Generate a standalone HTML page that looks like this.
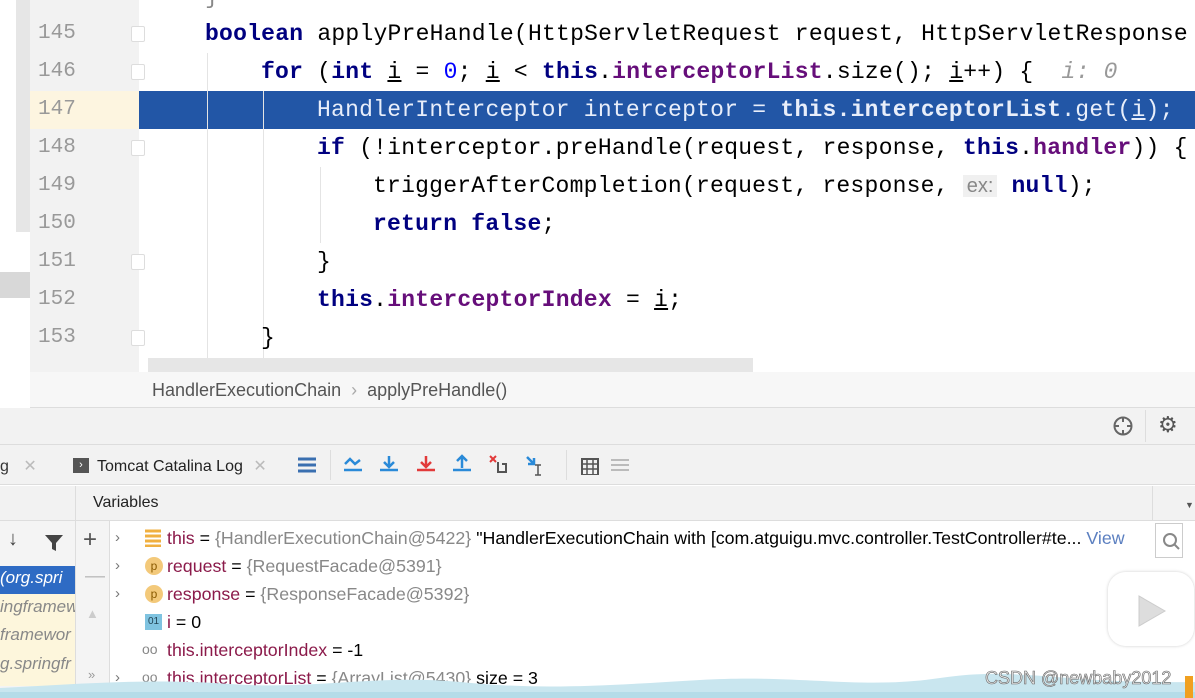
<!DOCTYPE html>
<html><head><meta charset="utf-8"><style>
*{margin:0;padding:0;box-sizing:border-box}
body{width:1195px;height:698px;overflow:hidden;background:#fff;position:relative;font-family:"Liberation Sans",sans-serif}
.a{position:absolute}
.code{position:absolute;font-family:"Liberation Mono",monospace;font-size:23px;letter-spacing:0.24px;white-space:pre;color:#000;line-height:38px;height:38px}
.k{color:#000080;font-weight:bold}
.f{color:#660e7a;font-weight:bold}
.n{color:#0000ff}
.u{text-decoration:underline}
.ln{position:absolute;left:38px;width:40px;font-family:"Liberation Mono",monospace;font-size:21px;color:#999;line-height:38px}
.fold{position:absolute;left:131px;width:14px;height:16px;border:1px solid #ddd;border-radius:2px;background:#fff}
.v{position:absolute;left:167px;font-size:17.8px;color:#000;white-space:nowrap;line-height:28px;height:28px}
.vn{color:#8b1a4a}
.g{color:#888}
.arr{position:absolute;left:115px;font-size:15px;color:#777;line-height:28px}
.pi{position:absolute;left:145px;width:18px;height:18px;border-radius:50%;background:#f3c97a;color:#8a5a00;font-size:12px;text-align:center;line-height:18px}
</style></head><body>
<div class="a" style="left:0;top:0;width:30px;height:408px;background:#fff"></div>
<div class="a" style="left:16px;top:0;width:14px;height:232px;background:#e6e6e6"></div>
<div class="a" style="left:0;top:272px;width:30px;height:26px;background:#d8d8d8"></div>
<div class="a" style="left:30px;top:0;width:109px;height:372px;background:#f2f2f2"></div>
<div class="a" style="left:30px;top:91px;width:109px;height:38px;background:#fdf5e0"></div>
<div class="ln" style="top:-23px">144</div>
<div class="ln" style="top:15px">145</div>
<div class="ln" style="top:53px">146</div>
<div class="ln" style="top:91px">147</div>
<div class="ln" style="top:129px">148</div>
<div class="ln" style="top:167px">149</div>
<div class="ln" style="top:205px">150</div>
<div class="ln" style="top:243px">151</div>
<div class="ln" style="top:281px">152</div>
<div class="ln" style="top:319px">153</div>
<div class="fold" style="top:26px"></div><div class="fold" style="top:64px"></div><div class="fold" style="top:140px"></div><div class="fold" style="top:254px"></div><div class="fold" style="top:330px"></div>
<div class="a" style="left:139px;top:91px;width:1056px;height:38px;background:#2256a6"></div>
<div class="a" style="left:207px;top:53px;width:1px;height:320px;background:#e4e4e4"></div>
<div class="a" style="left:263px;top:91px;width:1px;height:280px;background:#e4e4e4"></div>
<div class="a" style="left:320px;top:167px;width:1px;height:76px;background:#e4e4e4"></div>
<div class="a" style="left:148px;top:358px;width:605px;height:14px;background:#e6e6e6"></div>
<div class="code" style="left:205px;top:-22px;color:#888">}</div>
<div class="code" style="left:205px;top:15px"><span class="k">boolean</span> applyPreHandle(HttpServletRequest request, HttpServletResponse</div>
<div class="code" style="left:261px;top:53px"><span class="k">for</span> (<span class="k">int</span> <span class="u">i</span> = <span class="n">0</span>; <span class="u">i</span> &lt; <span class="k">this</span>.<span class="f">interceptorList</span>.size(); <span class="u">i</span>++) {  <span style="color:#999;font-style:italic">i: 0</span></div>
<div class="code" style="left:317px;top:91px;color:#e8eefa">HandlerInterceptor interceptor = <b>this.interceptorList</b>.get(<span class="u">i</span>);</div>
<div class="code" style="left:317px;top:129px"><span class="k">if</span> (!interceptor.preHandle(request, response, <span class="k">this</span>.<span class="f">handler</span>)) {</div>
<div class="code" style="left:373px;top:167px">triggerAfterCompletion(request, response, <span style="font-family:'Liberation Sans';font-size:20px;color:#888;background:#f0f0f0;padding:0 4px;letter-spacing:0">ex:</span> <span class="k">null</span>);</div>
<div class="code" style="left:373px;top:205px"><span class="k">return false</span>;</div>
<div class="code" style="left:317px;top:243px">}</div>
<div class="code" style="left:317px;top:281px"><span class="k">this</span>.<span class="f">interceptorIndex</span> = <span class="u">i</span>;</div>
<div class="code" style="left:261px;top:319px">}</div>
<div class="a" style="left:30px;top:372px;width:1165px;height:36px;background:#f7f7f7;border-bottom:1px solid #ddd"></div>
<div class="a" style="left:152px;top:380px;font-size:18px;color:#555">HandlerExecutionChain &nbsp;<span style="color:#aaa">›</span>&nbsp; applyPreHandle()</div>
<div class="a" style="left:0;top:408px;width:1195px;height:37px;background:#f2f2f2;border-bottom:1px solid #ddd"></div>
<svg class="a" style="left:1112px;top:415px" width="22" height="22"><circle cx="11" cy="11" r="8.5" fill="none" stroke="#666" stroke-width="2"/><path d="M11 2v5M11 15v5M2 11h5M15 11h5" stroke="#666" stroke-width="2"/></svg>
<div class="a" style="left:1145px;top:410px;width:1px;height:32px;background:#ddd"></div>
<div class="a" style="left:1158px;top:412px;font-size:22px;color:#555">⚙</div>
<div class="a" style="left:0;top:445px;width:1195px;height:40px;background:#f2f2f2;border-bottom:1px solid #ddd"></div>
<div class="a" style="left:0;top:456px;font-size:16px;color:#333">g <span style="color:#bbb;margin-left:10px">✕</span></div>
<div class="a" style="left:73px;top:458px;width:16px;height:15px;background:#555;color:#fff;font-size:11px;text-align:center;line-height:15px">›</div>
<div class="a" style="left:97px;top:456px;font-size:16px;color:#222">Tomcat Catalina Log <span style="color:#bbb;margin-left:6px">✕</span></div>
<svg class="a" style="left:296px;top:455px" width="24" height="20"><path d="M2 4h18M2 10h18M2 16h18" stroke="#3a6fb0" stroke-width="3"/></svg>
<div class="a" style="left:330px;top:450px;width:1px;height:30px;background:#ddd"></div>
<svg class="a" style="left:340px;top:452px" width="230" height="26">
<path d="M4 18h18M5 12l5-5 5 5 5-4" stroke="#2a8ad8" stroke-width="2.5" fill="none"/>
<path d="M40 18h18M49 4v10M44 10l5 5 5-5" stroke="#2a8ad8" stroke-width="2.5" fill="none"/>
<path d="M77 18h18M86 4v10M81 10l5 5 5-5" stroke="#e23a3a" stroke-width="2.5" fill="none"/>
<path d="M113 18h18M122 16V5M117 9l5-5 5 5" stroke="#2a8ad8" stroke-width="2.5" fill="none"/>
<path d="M150 4l6 6M156 4l-6 6" stroke="#e23a3a" stroke-width="2"/><path d="M158 10v10h8V12h-4" stroke="#555" stroke-width="2" fill="none"/>
<path d="M187 5l7 7M194 6v6h-6" stroke="#2a8ad8" stroke-width="2.5" fill="none"/><path d="M198 13v10M195 13h6M195 23h6" stroke="#555" stroke-width="1.5"/>
</svg>
<div class="a" style="left:566px;top:450px;width:1px;height:30px;background:#ddd"></div>
<svg class="a" style="left:573px;top:455px" width="60" height="20"><rect x="9" y="4" width="16" height="16" fill="none" stroke="#555" stroke-width="2"/><path d="M9 9h16M9 14h16M14 4v16M20 4v16" stroke="#555" stroke-width="1.5"/><path d="M38 5h18M38 10h18M38 15h18" stroke="#bbb" stroke-width="2"/></svg>
<div class="a" style="left:0;top:486px;width:1195px;height:35px;background:#f2f2f2;border-bottom:1px solid #ddd"></div>
<div class="a" style="left:75px;top:486px;width:1px;height:212px;background:#ddd"></div>
<div class="a" style="left:1152px;top:486px;width:1px;height:212px;background:#ddd"></div>
<div class="a" style="left:93px;top:494px;font-size:16px;color:#222">Variables</div>
<div class="a" style="left:1185px;top:500px;font-size:9px;color:#555">▼</div>
<div class="a" style="left:0;top:521px;width:75px;height:177px;background:#f4f4f4"></div>
<div class="a" style="left:8px;top:528px;font-size:20px;color:#444">↓</div>
<svg class="a" style="left:44px;top:534px" width="20" height="18"><path d="M1 1h18l-7 8v8l-4-2V9z" fill="#444"/></svg>
<div class="a" style="left:0;top:566px;width:75px;height:28px;background:#2e6bc4"></div>
<div class="a" style="left:0;top:594px;width:75px;height:92px;background:#fdf6dc"></div>
<div class="a" style="left:0;top:568px;font-size:17px;font-style:italic;color:#fff;white-space:nowrap;overflow:hidden;width:75px">(org.spri</div>
<div class="a" style="left:0;top:597px;font-size:17px;font-style:italic;color:#888;white-space:nowrap;overflow:hidden;width:75px">ingframew</div>
<div class="a" style="left:0;top:625px;font-size:17px;font-style:italic;color:#888;white-space:nowrap;overflow:hidden;width:75px">framewor</div>
<div class="a" style="left:0;top:654px;font-size:17px;font-style:italic;color:#888;white-space:nowrap;overflow:hidden;width:75px">g.springfr</div>
<div class="a" style="left:76px;top:521px;width:34px;height:177px;background:#f4f4f4;border-right:1px solid #ddd"></div>
<div class="a" style="left:83px;top:526px;font-size:24px;color:#555">+</div>
<div class="a" style="left:85px;top:565px;font-size:20px;color:#bbb">—</div>
<div class="a" style="left:86px;top:606px;font-size:13px;color:#ccc">▲</div>
<div class="a" style="left:88px;top:667px;font-size:13px;color:#999">»</div>
<div class="arr" style="top:524px">›</div><div class="arr" style="top:552px">›</div><div class="arr" style="top:580px">›</div><div class="arr" style="top:664px">›</div>
<svg class="a" style="left:145px;top:529px" width="16" height="18"><path d="M0 2h16M0 7h16M0 12h16M0 17h16" stroke="#f0b040" stroke-width="3"/></svg>
<div class="v" style="top:524px"><span class="vn">this</span> = <span class="g">{HandlerExecutionChain@5422}</span> "HandlerExecutionChain with [com.atguigu.mvc.controller.TestController#te... <span style="color:#5b7fc0">View</span></div>
<div class="pi" style="top:557px">p</div>
<div class="v" style="top:552px"><span class="vn">request</span> = <span class="g">{RequestFacade@5391}</span></div>
<div class="pi" style="top:585px">p</div>
<div class="v" style="top:580px"><span class="vn">response</span> = <span class="g">{ResponseFacade@5392}</span></div>
<div class="a" style="left:145px;top:614px;width:17px;height:16px;background:#7fc3e0;color:#245;font-size:10px;text-align:center;line-height:16px">01</div>
<div class="v" style="top:608px"><span class="vn">i</span> = 0</div>
<div class="a" style="left:142px;top:641px;font-size:14px;color:#888">oo</div>
<div class="v" style="top:636px"><span class="vn">this.interceptorIndex</span> = -1</div>
<div class="a" style="left:142px;top:669px;font-size:14px;color:#888">oo</div>
<div class="v" style="top:664px"><span class="vn">this.interceptorList</span> = <span class="g">{ArrayList@5430}</span>  size = 3</div>
<div class="a" style="left:1152px;top:521px;width:43px;height:177px;background:#fff"></div>
<div class="a" style="left:1155px;top:523px;width:28px;height:35px;border:1px solid #ccc;background:#fff"></div>
<svg class="a" style="left:1162px;top:532px" width="18" height="18"><circle cx="8" cy="8" r="6" fill="none" stroke="#888" stroke-width="2"/><path d="M12 12l5 5" stroke="#888" stroke-width="2"/></svg>
<div class="a" style="left:1108px;top:572px;width:86px;height:74px;border-radius:18px;background:rgba(255,255,255,.85);box-shadow:0 0 3px #ccc"></div>
<svg class="a" style="left:1135px;top:592px" width="36" height="40"><path d="M4 4v30l26-15z" fill="#ddd" stroke="#ccc"/></svg>
<svg class="a" style="left:0;top:664px" width="1195" height="34"><path d="M0 24 C80 20 150 14 230 20 S380 10 460 18 S600 22 700 16 S860 26 940 14 S1060 20 1195 18 V34 H0Z" fill="#c9e6ef"/><path d="M0 28 H1195 V34 H0Z" fill="#b5dce8"/></svg>
<div class="a" style="left:985px;top:668px;font-size:18px;-webkit-text-stroke:0.6px #666;color:#e8e8e8">CSDN @newbaby2012</div>
<div class="a" style="left:1185px;top:676px;width:8px;height:22px;background:#f0a020"></div>
</body></html>
